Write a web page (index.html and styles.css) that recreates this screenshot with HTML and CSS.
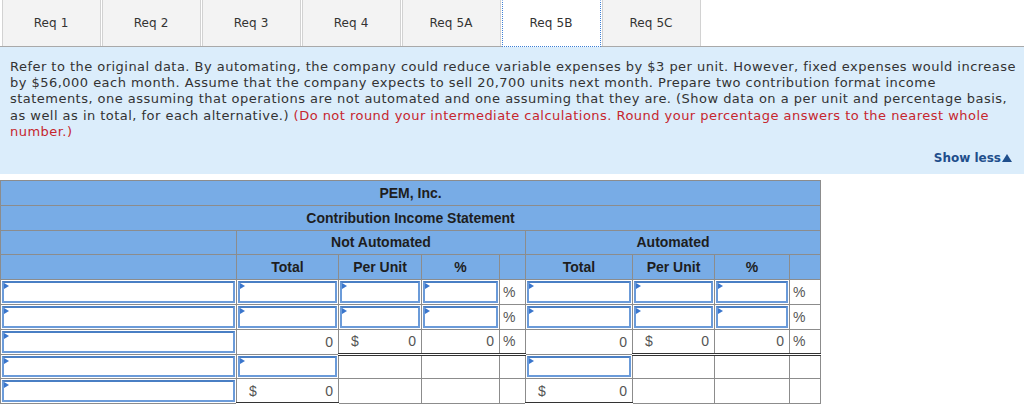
FILE: index.html
```html
<!DOCTYPE html>
<html>
<head>
<meta charset="utf-8">
<link rel="stylesheet" href="styles.css">
</head>
<body>
<div class="tabs">
  <div class="tab">Req 1</div>
  <div class="tab">Req 2</div>
  <div class="tab">Req 3</div>
  <div class="tab">Req 4</div>
  <div class="tab">Req 5A</div>
  <div class="tab active">Req 5B</div>
  <div class="tab">Req 5C</div>
</div>
<div class="panel">
  <p class="question">Refer to the original data. By automating, the company could reduce variable expenses by $3 per unit. However, fixed expenses would increase<br>by $56,000 each month. Assume that the company expects to sell 20,700 units next month. Prepare two contribution format income<br>statements, one assuming that operations are not automated and one assuming that they are. (Show data on a per unit and percentage basis,<br>as well as in total, for each alternative.) <span class="red">(Do not round your intermediate calculations. Round your percentage answers to the nearest whole<br>number.)</span></p>
  <div class="showless">Show less<span class="tri"></span></div>
</div>
<table class="stmt">
  <colgroup>
    <col class="c1"><col class="c2"><col class="c3"><col class="c4"><col class="c5"><col class="c6"><col class="c7"><col class="c8"><col class="c9">
  </colgroup>
  <tr class="hd"><th colspan="9">PEM, Inc.</th></tr>
  <tr class="hd"><th colspan="9">Contribution Income Statement</th></tr>
  <tr class="hd"><th></th><th colspan="4">Not Automated</th><th colspan="4">Automated</th></tr>
  <tr class="hd"><th></th><th>Total</th><th>Per Unit</th><th>%</th><th></th><th>Total</th><th>Per Unit</th><th>%</th><th></th></tr>
  <tr>
    <td class="in"><div class="inp"></div></td>
    <td class="in"><div class="inp"></div></td>
    <td class="in"><div class="inp"></div></td>
    <td class="in"><div class="inp"></div></td>
    <td class="pct">%</td>
    <td class="in"><div class="inp"></div></td>
    <td class="in"><div class="inp"></div></td>
    <td class="in"><div class="inp"></div></td>
    <td class="pct">%</td>
  </tr>
  <tr>
    <td class="in"><div class="inp"></div></td>
    <td class="in"><div class="inp"></div></td>
    <td class="in"><div class="inp"></div></td>
    <td class="in"><div class="inp"></div></td>
    <td class="pct">%</td>
    <td class="in"><div class="inp"></div></td>
    <td class="in"><div class="inp"></div></td>
    <td class="in"><div class="inp"></div></td>
    <td class="pct">%</td>
  </tr>
  <tr>
    <td class="in"><div class="inp"></div></td>
    <td class="num sub">0</td>
    <td class="num sub dbl"><div class="cur"><span>$</span><span>0</span></div></td>
    <td class="num sub dbl">0</td>
    <td class="pct sub dbl">%</td>
    <td class="num sub">0</td>
    <td class="num sub dbl"><div class="cur"><span>$</span><span>0</span></div></td>
    <td class="num sub dbl">0</td>
    <td class="pct sub dbl">%</td>
  </tr>
  <tr>
    <td class="in"><div class="inp"></div></td>
    <td class="in"><div class="inp"></div></td>
    <td></td>
    <td></td>
    <td></td>
    <td class="in"><div class="inp"></div></td>
    <td></td>
    <td></td>
    <td></td>
  </tr>
  <tr>
    <td class="in"><div class="inp"></div></td>
    <td class="num sub dbl"><div class="cur"><span>$</span><span>0</span></div></td>
    <td></td>
    <td></td>
    <td></td>
    <td class="num sub dbl"><div class="cur"><span>$</span><span>0</span></div></td>
    <td></td>
    <td></td>
    <td></td>
  </tr>
</table>
</body>
</html>
```
FILE: styles.css
```css
html, body {
  margin: 0;
  padding: 0;
  background: #fff;
}
body {
  font-family: "DejaVu Sans", Verdana, sans-serif;
  color: #333;
  width: 1024px;
  height: 404px;
  overflow: hidden;
}
.tabs {
  display: flex;
  gap: 1px;
  padding-left: 2px;
  height: 46px;
  border-bottom: 1px solid #a9a9a9;
}
.tab {
  width: 99px;
  height: 46px;
  box-sizing: border-box;
  background: #f3f3f3;
  border-left: 1px solid #d2d2d2;
  border-right: 1px solid #d2d2d2;
  display: flex;
  align-items: center;
  justify-content: center;
  font-size: 12px;
  letter-spacing: 0.1px;
  color: #333;
  padding-right: 1px;
}
.tab.active {
  background: #fff;
  border: 1px dotted #3d7fd6;
  border-top-color: transparent;
  margin-bottom: -1px;
  height: 47px;
  padding-bottom: 1px;
}
.panel {
  background: #dbedfb;
  height: 127px;
  padding: 12px 2px 0 10px;
  box-sizing: border-box;
  display: flex;
  flex-direction: column;
}
.question {
  margin: 0;
  font-size: 13px;
  line-height: 16.2px;
  letter-spacing: 0.47px;
  white-space: nowrap;
  color: #333;
}
.red {
  color: #c6262e;
}
.showless {
  margin-top: auto;
  margin-bottom: 9px;
  margin-right: 10px;
  align-self: flex-end;
  font-size: 12px;
  font-weight: bold;
  color: #1f4f8c;
  display: flex;
  align-items: center;
}
.tri {
  display: inline-block;
  width: 0;
  height: 0;
  margin-left: 1px;
  margin-top: -1px;
  border-left: 5px solid transparent;
  border-right: 5px solid transparent;
  border-bottom: 8px solid #1f4f8c;
}
.stmt {
  margin-top: 6px;
  border-collapse: collapse;
  table-layout: fixed;
  width: 821px;
  font-family: "Liberation Sans", Arial, sans-serif;
}
.c1 { width: 236px; }
.c2 { width: 102px; }
.c3 { width: 83px; }
.c4 { width: 78px; }
.c5 { width: 26px; }
.c6 { width: 107px; }
.c7 { width: 82px; }
.c8 { width: 75px; }
.c9 { width: 31px; }
.stmt th, .stmt td {
  border: 1px solid #8c8c8c;
  height: 24.8px;
  padding: 0;
  box-sizing: border-box;
}
.hd th {
  background: #78ace6;
  font-size: 14px;
  font-weight: bold;
  color: #1e1e1e;
  text-align: center;
}
.stmt td {
  font-size: 14px;
  color: #555;
}
.stmt td.in {
  padding: 1px;
}
.inp {
  position: relative;
  height: 21.8px;
  box-sizing: border-box;
  background: #fff;
  border: 2px solid #6b9bd9;
  border-top-color: #4a7fc4;
}
.inp::before {
  content: "";
  position: absolute;
  left: 0;
  top: 0;
  border-top: 3px solid transparent;
  border-bottom: 3px solid transparent;
  border-left: 5px solid #3a76cc;
}
.num {
  text-align: right;
  padding-right: 5px !important;
}
.pct {
  padding-left: 3px !important;
}
.sub {
  border-top: 1px solid #111 !important;
}
.dbl {
  border-bottom: 3px double #333 !important;
}
.cur {
  display: flex;
  justify-content: space-between;
  padding-left: 12px;
}
```
